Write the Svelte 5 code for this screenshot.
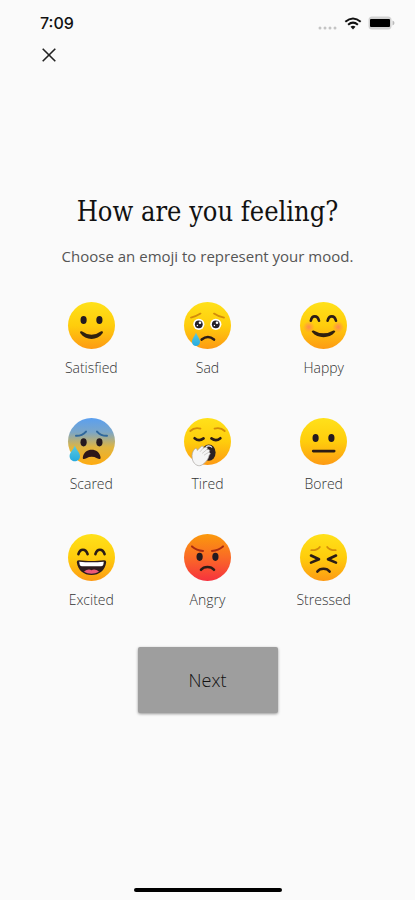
<script lang="ts">
  const moods = ['Satisfied', 'Sad', 'Happy', 'Scared', 'Tired', 'Bored', 'Excited', 'Angry', 'Stressed'];

  let selected = $state('');

  // Face fills that differ from the usual yellow
  const fills: Record<string, string> = { Scared: 'url(#face-blue)', Angry: 'url(#face-red)' };
</script>

{#snippet eyes(y: number)}
  <ellipse cx="15.6" cy={y} rx="3.1" ry="4.1" fill="#241a20" />
  <ellipse cx="31.4" cy={y} rx="3.1" ry="4.1" fill="#241a20" />
{/snippet}

{#snippet face(mood: string)}
  <svg class="face" viewBox="0 0 47 47" aria-hidden="true">
    <circle cx="23.5" cy="23.5" r="23.5" fill={fills[mood] ?? 'url(#face-yellow)'} />
    {#if mood === 'Satisfied'}
      {@render eyes(18)}
      <path d="M13.8 29.2Q23.5 36.2 33.2 29.2Q35.8 28.8 34.6 31.2C29.5 38.8 17.5 38.8 12.4 31.2Q11.2 28.8 13.8 29.2Z" fill="#30200f" />
    {:else if mood === 'Sad'}
      <path d="M7 15.6Q11.5 14.8 16.5 11.6M30 11.6Q34.5 14.8 40 15.6" class="line brow" />
      <circle cx="14.8" cy="22.3" r="5.6" fill="#fff" />
      <circle cx="31.8" cy="22.3" r="5.6" fill="#fff" />
      <circle cx="14.8" cy="22.3" r="3.9" fill="#24202a" />
      <circle cx="31.8" cy="22.3" r="3.9" fill="#24202a" />
      <circle cx="16" cy="20.7" r="1.3" fill="#fff" />
      <circle cx="33" cy="20.7" r="1.3" fill="#fff" />
      <circle cx="13.4" cy="23.5" r=".7" fill="#fff" />
      <circle cx="30.4" cy="23.5" r=".7" fill="#fff" />
      <path d="M17.7 37.6Q24 32.4 30 37.6" class="line" />
      <path d="M12 30.5C13 34 16.2 36.5 16 40C15.8 45.3 8.2 45.3 8 40C7.8 36.5 11 34 12 30.5Z" fill="url(#tear)" />
    {:else if mood === 'Happy'}
      <circle cx="8.8" cy="25" r="5.8" fill="url(#blush)" />
      <circle cx="38.2" cy="25" r="5.8" fill="url(#blush)" />
      <path d="M10.8 18.8C12 12.9 17.5 12.9 19 18.8M27.6 18.8C29 12.9 34.5 12.9 36 18.8" class="line" />
      <path d="M13.6 28.4Q23.5 34.2 33.4 28.4Q36.2 28.2 34.8 30.3C29.5 36.8 17.5 36.8 12.2 30.3Q10.8 28.2 13.6 28.4Z" fill="#30200f" />
    {:else if mood === 'Scared'}
      <path d="M8 17.8Q14 18 18 13.6M29 13.6Q33 18 39 17.8" class="line brow-blue" />
      {@render eyes(24.3)}
      <path d="M23.7 31.8C28 31.8 31.5 34.5 32.4 38.5C33.3 41.8 31 41.3 29 40.2C25.6 38.4 21.8 38.4 18.4 40.2C16.4 41.3 14 41.8 15 38.5C15.9 34.5 19.4 31.8 23.7 31.8Z" fill="#2e1719" />
      <path d="M6.8 27.5C8.3 32 12.2 34.5 12 38.4C11.6 44.7 2 44.7 1.6 38.4C1.4 34.5 5.3 32 6.8 27.5Z" fill="url(#tear)" />
    {:else if mood === 'Tired'}
      <path d="M6.3 13Q10.5 8.8 16.5 10.6M30.5 10.6Q36.5 8.8 40.7 13" class="line brow" />
      <path d="M10.6 20.2Q15 23.8 19.6 20.4M27.4 20.4Q32 23.8 36.4 20.2" class="line" />
      <ellipse cx="24.8" cy="34.6" rx="6.8" ry="8.2" fill="#2a2023" />
      <path d="M22 28.5Q26 27 28 29.5" fill="none" stroke="#fff" stroke-width="1.2" />
      <path d="M8.2 40.2C7.6 36.5 8.6 33.5 10.3 31.4C11.8 29.7 13 30.2 13.2 32.4L17.2 28.6C18.8 27.4 20.2 28.7 19.2 30.2L21.4 29.2C23.2 28.7 24.1 30.3 22.9 31.5L24.5 31.5C26 31.8 26 33.2 25 34.1L25.6 34.6C26.8 35.4 26.2 36.5 25.1 37.2C24.6 41 21 45.5 17 47.4C13.5 48.8 8.9 45.7 8.2 40.2Z" fill="#f5f5f5" stroke="#a9a5a0" stroke-width=".7" />
      <path d="M19.2 30.2L16 33.8M22.9 31.5L18.2 35.4M25 34.1L20 37.2" fill="none" stroke="#bdbab7" stroke-width=".7" />
    {:else if mood === 'Bored'}
      {@render eyes(20)}
      <path d="M13.2 33.1H34.2" class="line" />
    {:else if mood === 'Excited'}
      <path d="M10.4 20.2C12 14.2 17.8 14.2 19.6 20.2M27.4 20.2C29 14.2 34.8 14.2 36.6 20.2" class="line" />
      <path d="M11 26.2C18.5 27.2 28.5 27.2 36 26.2Q38.4 26.1 38.2 28.3C37 36.6 31.2 41 23.5 41C15.8 41 10 36.6 8.8 28.3Q8.6 26.1 11 26.2Z" fill="#2c1b1d" />
      <path d="M11.2 27.7Q23.5 28.8 35.8 27.7L35.3 30.8Q35 32.2 33.3 32.2H13.7Q12 32.2 11.7 30.8Z" fill="#fff" />
      <path d="M16 37.8C18.5 35.2 21.6 35 23.5 36.2C25.4 35 28.5 35.2 31 37.8C26.5 40.3 20.5 40.3 16 37.8Z" fill="#ee5878" />
    {:else if mood === 'Angry'}
      {@render eyes(22.8)}
      <path d="M8 12.4Q12.5 16.2 19 17M28 17Q34.5 16.2 39 12.4" class="line brow-red" />
      <path d="M17 35.8C20 32 27 32 30 35.8" class="line" />
    {:else}
      <path d="M11.3 16.2Q17.5 16.4 19.8 13M27.2 13Q29.5 16.4 35.7 16.2" class="line brow" />
      <path d="M11 21.5L19 25.2L11 28.6M36 21.5L28 25.2L36 28.6" class="line" />
      <path d="M17.4 37.6C20 33.8 27 33.8 29.6 37.6" class="line" />
    {/if}
  </svg>
{/snippet}

<svg class="defs" width="0" height="0" aria-hidden="true">
  <defs>
    <linearGradient id="face-yellow" x2="0" y2="1">
      <stop offset="0" stop-color="#ffe11a" />
      <stop offset=".5" stop-color="#ffcd0c" />
      <stop offset="1" stop-color="#fd9a14" />
    </linearGradient>
    <linearGradient id="face-blue" x2="0" y2="1">
      <stop offset="0" stop-color="#5a9ff0" />
      <stop offset=".3" stop-color="#7ba6c8" />
      <stop offset=".62" stop-color="#dfb541" />
      <stop offset="1" stop-color="#ffab10" />
    </linearGradient>
    <linearGradient id="face-red" x2="0" y2="1">
      <stop offset="0" stop-color="#fb9a0c" />
      <stop offset=".5" stop-color="#fa6a26" />
      <stop offset="1" stop-color="#f6323e" />
    </linearGradient>
    <linearGradient id="tear" x2="0" y2="1">
      <stop offset="0" stop-color="#5cc9de" />
      <stop offset="1" stop-color="#26abe0" />
    </linearGradient>
    <radialGradient id="blush">
      <stop offset="0" stop-color="#ff8354" stop-opacity=".9" />
      <stop offset="1" stop-color="#ff8354" stop-opacity="0" />
    </radialGradient>
  </defs>
</svg>

<div class="screen">
  <header>
    <div class="status">
      <time>7:09</time>
      <div class="indicators">
        <svg width="20" height="4" viewBox="0 0 20 4" fill="#c4c4c4" aria-hidden="true">
          <circle cx="2" cy="2" r="1.5" /><circle cx="7" cy="2" r="1.5" /><circle cx="12" cy="2" r="1.5" /><circle cx="17" cy="2" r="1.5" />
        </svg>
        <svg width="18" height="13" viewBox="0 0 18 13" fill="none" stroke="#111" stroke-width="2" aria-hidden="true">
          <path d="M1.3 4.8Q9 -1.8 16.7 4.8M4.1 7.7Q9 3.5 13.9 7.7" />
          <path d="M6.5 9.7Q9 7.8 11.5 9.7L9 12.4Z" fill="#111" stroke="none" />
        </svg>
        <svg width="27" height="14" viewBox="0 0 27 14" aria-hidden="true">
          <rect x=".5" y=".5" width="23" height="13" rx="3.5" fill="#d2d2d2" />
          <rect x="2" y="3" width="20" height="8" rx="1" fill="#000" />
          <path d="M24.5 4.5Q26.5 5.3 26.5 7T24.5 9.5Z" fill="#bbb" />
        </svg>
      </div>
    </div>
    <button class="close" type="button" aria-label="Close">
      <svg width="14" height="14" viewBox="0 0 14 14" fill="none" stroke="#222" stroke-width="1.6" aria-hidden="true">
        <path d="M.7 .7L13.3 13.3M13.3 .7L.7 13.3" />
      </svg>
    </button>
  </header>

  <main>
    <h1>How are you feeling?</h1>
    <p>Choose an emoji to represent your mood.</p>
    <div class="moods">
      {#each moods as mood (mood)}
        <button class="mood" type="button" aria-pressed={selected === mood} onclick={() => (selected = mood)}>
          {@render face(mood)}
          <span>{mood}</span>
        </button>
      {/each}
    </div>
    <button class="next" type="button">Next</button>
  </main>

  <div class="home"></div>
</div>

<style>
  :global(body) { margin: 0; background: #fafafa; }
  .defs { position: absolute; }
  .screen { display: flex; flex-direction: column; min-height: 100vh; box-sizing: border-box;
    padding: 12px 0 8px; background: #fafafa; color: #111;
    font-family: "Open Sans", "Noto Sans", sans-serif; }
  button { border: 0; padding: 0; background: none; color: inherit; font: inherit; cursor: pointer; }
  button:focus-visible { outline: 2px solid #777; outline-offset: 2px; }
  svg { display: block; }

  header { padding: 0 20px 0 40px; }
  .status { display: flex; align-items: center; justify-content: space-between; height: 22px; }
  time { font: 500 16px/22px Inter, sans-serif; }
  .indicators { display: flex; align-items: center; gap: 6px; }
  .indicators svg:first-child { align-self: flex-end; }
  .close { display: grid; place-items: center; width: 18px; height: 18px; margin-top: 12px; }

  main { display: flex; flex-direction: column; align-items: center; margin-top: 130px; }
  h1 { margin: 0; font: 400 27px/36px "DejaVu Serif Condensed", "DejaVu Serif", serif; }
  p { margin: 14px 0 0; font-size: 15px; line-height: 24px; color: #555; }
  .moods { display: grid; grid-template-columns: repeat(3, 1fr); row-gap: 40px; width: 84%;
    margin-top: 34px; }
  .mood { display: flex; flex-direction: column; align-items: center; gap: 9px; }
  .mood span { font-size: 14px; font-weight: 300; line-height: 20px; color: #333; }
  .mood[aria-pressed="true"] span { font-weight: 600; }
  .face { width: 47px; height: 47px; overflow: visible; }
  .line { fill: none; stroke: #2b1c16; stroke-width: 2.6; stroke-linecap: round; stroke-linejoin: round; }
  .brow { stroke: #d38c0a; stroke-width: 1.8; }
  .brow-blue { stroke: #2f679b; stroke-width: 2; }
  .brow-red { stroke: #a82b12; stroke-width: 2; }
  .next { min-width: 140px; margin-top: 37px; padding: 20px 40px; border-radius: 2px;
    background: #9e9e9e; box-shadow: 0 1px 3px rgba(0, 0, 0, .4);
    font-size: 18px; font-weight: 300; line-height: 26px; }

  .home { width: 148px; height: 4px; margin: auto auto 0; border-radius: 2px; background: #000; }
</style>
